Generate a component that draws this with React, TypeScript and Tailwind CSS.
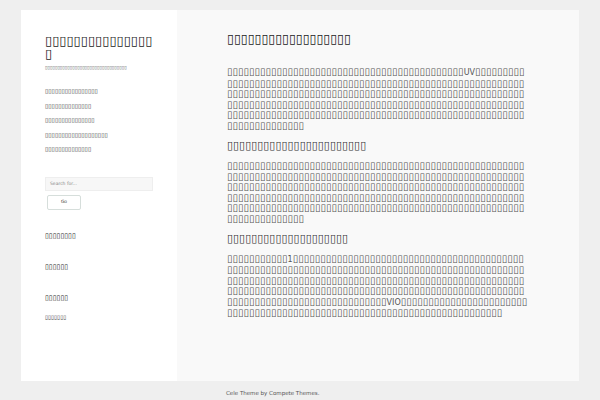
import React from "react";

const box = (n: number) => "▯".repeat(n);

const navLinks = [box(16), box(14), box(15), box(19), box(14)];

function Latin({ children }: { children: React.ReactNode }) {
  return <span className="text-[8px]">{children}</span>;
}

export default function App() {
  return (
    <div className="min-h-screen bg-[#efefef] font-['DejaVu_Sans',sans-serif] text-[#333]">
      <div className="mx-[21px] pt-[10px]">
        <div className="flex h-[371px]">
          <aside className="w-[156px] shrink-0 bg-white px-6 pt-[24px]">
            <h1 className="break-all text-[13px] leading-[13px] text-[#222]">{box(16)}</h1>
            <p className="mt-[5px] break-all text-[4.5px] leading-[5px] text-[#555]">{box(33)}</p>
            <nav className="mt-[18px] flex flex-col gap-[9.5px]">
              {navLinks.map((t, i) => (
                <a key={i} className="block text-[6px] leading-[5px] text-[#333]">
                  {t}
                </a>
              ))}
            </nav>
            <div className="mt-[26px]">
              <div className="flex h-[14px] w-[108px] items-center border border-[#eee] bg-[#f7f7f7] px-1 text-[4.5px] text-[#888]">
                Search for...
              </div>
              <button className="ml-[2px] mt-[4px] block h-[15px] w-[34px] rounded-[2px] border border-[#d6dedb] bg-white text-[4.5px] text-[#444]">
                Go
              </button>
            </div>
            <h3 className="mt-[22px] text-[7px] leading-[8px] text-[#222]">{box(8)}</h3>
            <h3 className="mt-[23px] text-[7px] leading-[8px] text-[#222]">{box(6)}</h3>
            <h3 className="mt-[23px] text-[7px] leading-[8px] text-[#222]">{box(6)}</h3>
            <p className="mt-[12px] text-[5.5px] leading-[6px] text-[#444]">{box(7)}</p>
          </aside>
          <main className="flex-1 bg-[#f9f9f9] pl-[50px] pr-[50px] pt-[22px]">
            <h2 className="text-[12.5px] leading-[14px] text-[#222]">{box(18)}</h2>
            <p className="mt-[21px] break-all text-[10px] leading-[10.5px] text-[#555]">
              {box(43)}
              <Latin>UV</Latin>
              {box(225)}
              {box(14)}
            </p>
            <h3 className="mt-[9px] text-[11px] leading-[12px] text-[#333]">{box(23)}</h3>
            <p className="mt-[9px] break-all text-[10px] leading-[10.5px] text-[#555]">
              {box(284)}
            </p>
            <h3 className="mt-[9px] text-[11px] leading-[12px] text-[#333]">{box(20)}</h3>
            <p className="mt-[9px] break-all text-[10px] leading-[10.4px] text-[#555]">
              {box(11)}
              <Latin>1</Latin>
              {box(233)}
              <Latin>VIO</Latin>
              {box(73)}
            </p>
          </main>
        </div>
        <footer className="ml-[205px] pt-[8px] text-[5.5px] text-[#555]">
          Cele Theme by Compete Themes.
        </footer>
      </div>
    </div>
  );
}
